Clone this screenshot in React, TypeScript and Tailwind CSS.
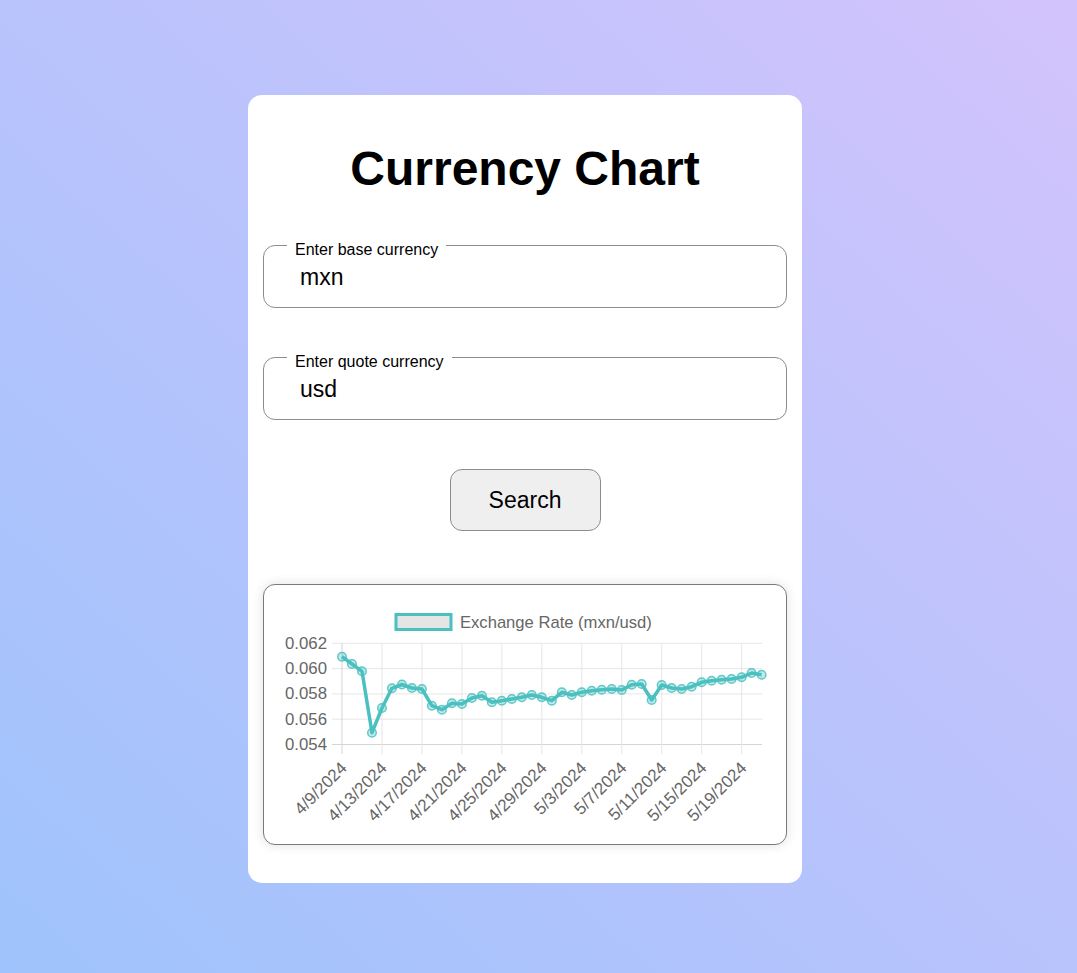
import React from "react";

const ys = [
  655.7, 663, 670.3, 731.7, 707, 687.3, 683.5, 687, 688, 704.7, 708.7, 702.3, 703,
  697, 694.7, 701.3, 699.7, 698, 696.3, 694, 696.3, 699.7, 691.3, 694, 691.3,
  689.7, 688.7, 688, 689, 683.7, 683, 699, 684, 687, 688, 685.7, 681.3, 679.7,
  678.7, 678, 676.3, 672, 673.7,
];

const gridYs = [642.3, 667.6, 692.9, 718.2, 743.5];
const yLabels = ["0.062", "0.060", "0.058", "0.056", "0.054"];
const xLabels = [
  "4/9/2024",
  "4/13/2024",
  "4/17/2024",
  "4/21/2024",
  "4/25/2024",
  "4/29/2024",
  "5/3/2024",
  "5/7/2024",
  "5/11/2024",
  "5/15/2024",
  "5/19/2024",
];

function Chart() {
  const pts = ys.map((y, i) => [342 + i * 9.99, y] as const);
  const d = pts.map((p, i) => `${i ? "L" : "M"}${p[0].toFixed(1)} ${p[1]}`).join(" ");
  return (
    <svg width="521" height="259" className="block">
      <g transform="translate(-264,-584)" fontFamily="'Liberation Sans', Arial, sans-serif">
        <rect x="396" y="613.5" width="55" height="15" fill="#e5e5e5" stroke="#4bc0c0" strokeWidth="3" />
        <text x="460" y="626.5" fontSize="16.6" fill="#666">
          Exchange Rate (mxn/usd)
        </text>
        {gridYs.map((y, i) => (
          <line key={"h" + i} x1="332" x2="762" y1={y} y2={y} stroke={i === 4 ? "#d4d4d4" : "#e6e6e6"} strokeWidth="1" />
        ))}
        {xLabels.map((_, i) => {
          const x = 342 + i * 39.97;
          return <line key={"v" + i} x1={x} x2={x} y1="642.3" y2="753" stroke={i === 0 ? "#d4d4d4" : "#e6e6e6"} strokeWidth="1" />;
        })}
        {yLabels.map((t, i) => (
          <text key={"y" + i} x="327" y={gridYs[i] + 5.5} fontSize="16.8" fill="#666" textAnchor="end">
            {t}
          </text>
        ))}
        {xLabels.map((t, i) => {
          const ax = 342 + i * 39.97 + 6;
          const ay = 768;
          return (
            <text
              key={"x" + i}
              x={ax}
              y={ay}
              fontSize="17"
              fill="#666"
              textAnchor="end"
              transform={`rotate(-45 ${ax} ${ay})`}
            >
              {t}
            </text>
          );
        })}
        <path d={d} fill="none" stroke="#4bc0c0" strokeWidth="3.5" strokeLinejoin="round" />
        {pts.map((p, i) => (
          <circle
            key={"c" + i}
            cx={p[0]}
            cy={p[1]}
            r="4.3"
            fill="rgba(75,192,192,0.35)"
            stroke="rgba(75,192,192,0.85)"
            strokeWidth="1.5"
          />
        ))}
      </g>
    </svg>
  );
}

function Field({ label, value }: { label: string; value: string }) {
  return (
    <div className="relative h-[63px] w-full rounded-[12px] border border-[#8c8c8c] flex items-center pl-[36px]">
      <span className="absolute left-[23px] top-[-5px] bg-white px-2 text-[16px] leading-[18px] text-black">
        {label}
      </span>
      <span className="text-[23px] leading-[26px] text-black mt-[1px]">{value}</span>
    </div>
  );
}

export default function App() {
  return (
    <div
      className="min-h-screen w-full flex justify-start pl-[248px] pt-[95px] bg-[linear-gradient(to_top_right,#9fc3fc,#d3c3fc)]"
      style={{ fontFamily: "'Liberation Sans', Arial, sans-serif" }}
    >
      <div className="w-[554px] h-[788px] bg-white rounded-[14px] px-[15px] flex flex-col items-center">
        <h1 className="mt-[46px] text-[48px] leading-[55px] font-bold text-black text-center">Currency Chart</h1>
        <div className="mt-[49px] w-full">
          <Field label="Enter base currency" value="mxn" />
        </div>
        <div className="mt-[49px] w-full">
          <Field label="Enter quote currency" value="usd" />
        </div>
        <button className="mt-[49px] w-[151px] h-[62px] rounded-[12px] border border-[#8c8c8c] bg-[#efefef] text-[23px] text-black">
          Search
        </button>
        <div className="mt-[53px] w-full h-[261px] rounded-[12px] border border-[#7a7a7a] bg-white shadow-[0_0_12px_rgba(0,0,0,0.12)] overflow-hidden">
          <Chart />
        </div>
      </div>
    </div>
  );
}
